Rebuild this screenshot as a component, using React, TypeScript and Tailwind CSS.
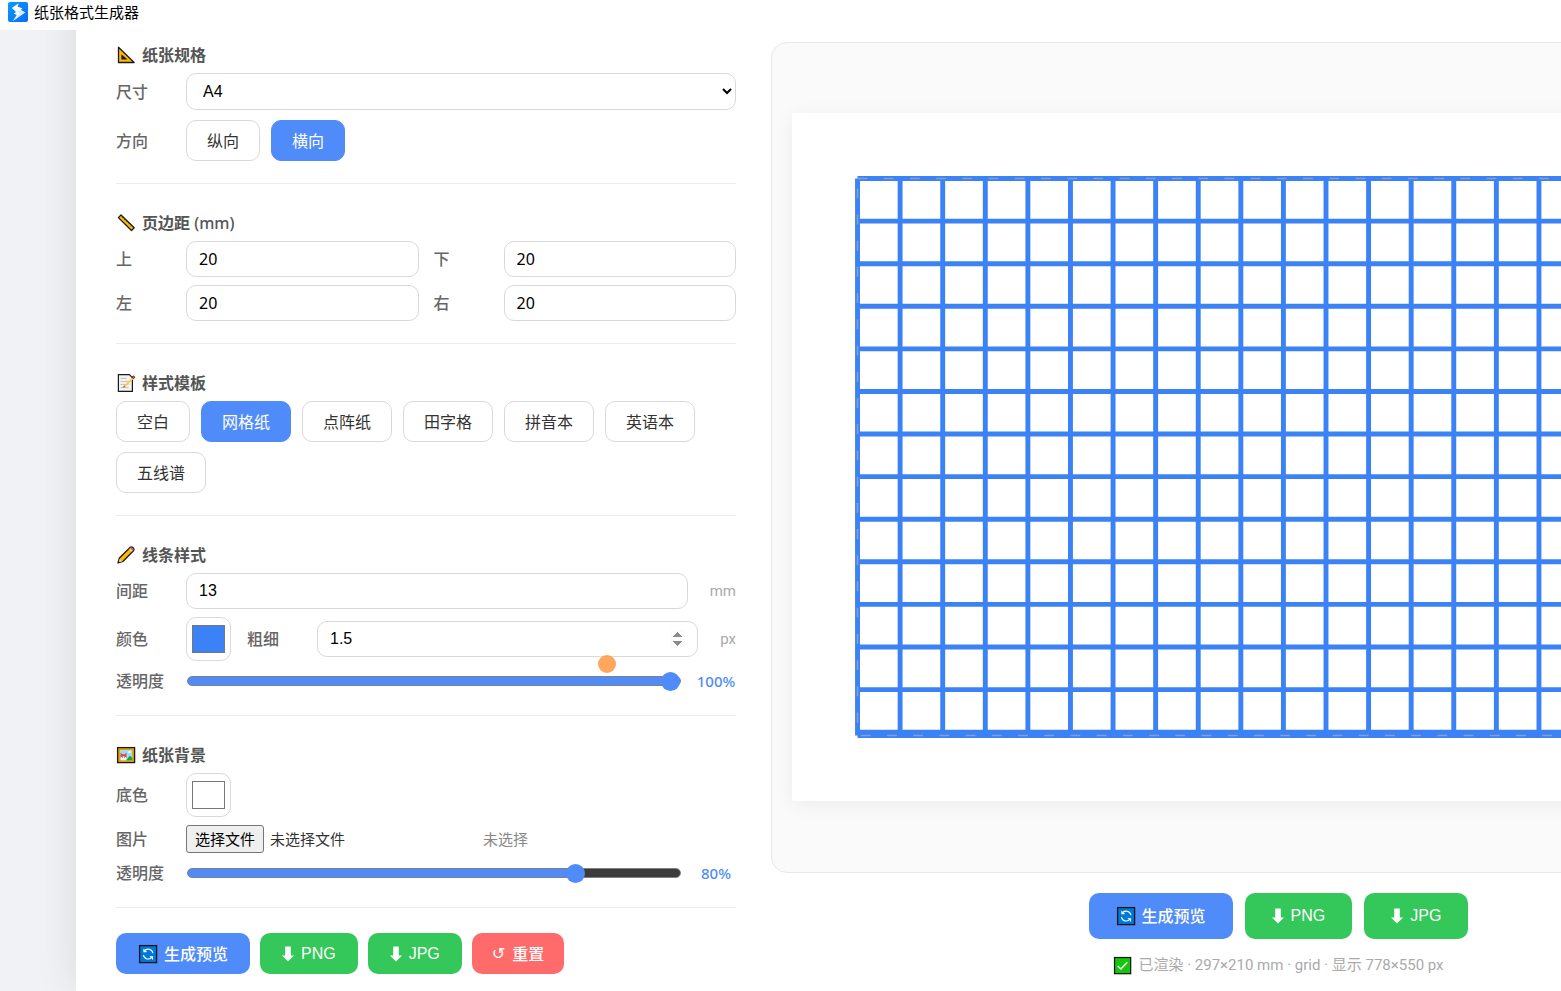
import { ReactNode, useState } from "react";

const PAPER = { width: 973, height: 688 };
const SIZE_MM = { width: 297, height: 210 };
const SCALE = PAPER.width / SIZE_MM.width;

const TEMPLATES = ["空白", "网格纸", "点阵纸", "田字格", "拼音本", "英语本", "五线谱"];

const fieldClass =
  "min-w-0 flex-1 rounded-[10px] border border-[#d9d9d9] bg-white px-3 text-base text-black outline-none";

/* ---------- icons ---------- */

function LogoIcon() {
  return (
    <svg viewBox="0 0 20 20" className="size-5" aria-hidden="true">
      <defs>
        <linearGradient id="logo-bg" x1="0" y1="0" x2="1" y2="1">
          <stop offset="0" stopColor="#0a9bff" />
          <stop offset="1" stopColor="#0a6cf5" />
        </linearGradient>
      </defs>
      <rect width="20" height="20" rx="2" fill="url(#logo-bg)" />
      <path d="M10.6 1.200 3.800 6l4.300 4-2.300 1.400 3 1.500-4 6.100 12.200-8.600-4.200-2.400 1.600-1.800-4.600-1.500z" fill="#fff" />
      <path d="m12.800 8 4.200 2.400-12.200 8.600 7.200-7.700-3.600-1.500z" fill="#d3ebff" />
    </svg>
  );
}

function SetSquareIcon() {
  return (
    <svg viewBox="0 0 20 20" className="size-5" aria-hidden="true">
      <path d="M2.5 2.2v15.3h15.6z" fill="#ffb900" stroke="#1a1a1a" strokeWidth="1.3" strokeLinejoin="round" />
      <path d="M5.4 9.2v5.4h6.2z" fill="#1a1a1a" />
    </svg>
  );
}

function RulerIcon() {
  return (
    <svg viewBox="0 0 20 20" className="size-5" aria-hidden="true">
      <path d="M2.4 4.6 5 2l13.2 12.8-2.7 2.7z" fill="#ffb900" stroke="#1a1a1a" strokeWidth="1.3" strokeLinejoin="round" />
      <path d="m6.900 3.900-1 1M9 6 8 7M11.200 8.100l-1 1M13.400 10.200l-1 1M15.500 12.300l-1 1" stroke="#1a1a1a" strokeWidth=".6" />
    </svg>
  );
}

function MemoIcon() {
  return (
    <svg viewBox="0 0 20 20" className="size-5" aria-hidden="true">
      <path d="M2.400 1.700h11l3 3v13.700h-14z" fill="#f2f2f2" stroke="#1a1a1a" strokeWidth="1.200" />
      <path d="M4.500 5.500h6M4.500 8.500h8M4.500 11.500h8M4.500 14.500h8" stroke="#c4c4c4" strokeWidth="1" />
      <path d="m6.800 15 1.300-2.400 9-8.900 1.400 1.400-9.200 8.700z" fill="#ffc83d" />
      <path d="m15.900 4.200 1.200-1.100c.6-.5 2.200 1 1.600 1.600l-1.200 1.100z" fill="#f03a4e" stroke="#1a1a1a" strokeWidth=".7" />
      <path d="m6.800 15 1.300-2.400 1.200 1.200z" fill="#8a6a38" />
    </svg>
  );
}

function PencilIcon() {
  return (
    <svg viewBox="0 0 20 20" className="size-5" aria-hidden="true">
      <path d="m2 18 1.400-5L14.300 2.200c1.500-1.300 4.800 1.700 3.400 3.300L6.900 16.500z" fill="#ffb900" stroke="#1a1a1a" strokeWidth="1.300" strokeLinejoin="round" />
      <path d="m14.200 3.300.6-.7c1.100-.8 3.200 1.100 2.500 2.500l-.6.700z" fill="#e8485b" />
      <path d="m13.200 4.200 1-.9 2.500 2.500-.9 1z" fill="#d0d0d0" />
      <path d="m2.700 17.300.9-3.400 2.500 2.300z" fill="#f5d7a5" />
      <path d="m2 18 .6-2 1.400 1.400z" fill="#1a1a1a" />
    </svg>
  );
}

function FrameIcon() {
  return (
    <svg viewBox="0 0 20 20" className="size-5" aria-hidden="true">
      <rect x="1.600" y="2.600" width="17" height="15" fill="#e6a100" stroke="#1a1a1a" strokeWidth="1.300" />
      <rect x="4" y="5" width="12.200" height="10.200" fill="#9bdcf8" />
      <circle cx="13.500" cy="7" r="1.200" fill="#fff" />
      <path d="m10.500 15.200 3.200-4.800 2.500 2.500v2.300z" fill="#16a34a" />
      <path d="m4.500 7.500 1.700 1.800h2.600l1.700-1.800v5h-6z" fill="#e8452e" />
      <path d="M5 15.200v-3l2.500-1 2.500 1v3z" fill="#f2f2f2" />
      <path d="M6.200 12.300h.6M8.300 12.300h.6" stroke="#1a1a1a" strokeWidth=".8" />
    </svg>
  );
}

function RefreshTileIcon() {
  return (
    <svg viewBox="0 0 20 20" className="size-5" fill="none" aria-hidden="true">
      <rect x="1.600" y="1.600" width="17" height="17" fill="#0078d7" stroke="#141414" strokeWidth="1.300" />
      <path d="M5.400 11.200a4.800 4.800 0 0 0 8.700 1.700M14.900 9.200a4.800 4.800 0 0 0-8.700-1.900" stroke="#fff" strokeWidth="1.100" />
      <path d="M5.900 4.900v2.700h2.700M14.500 15.500v-2.700h-2.700" stroke="#fff" strokeWidth="1.100" />
    </svg>
  );
}

function CheckTileIcon() {
  return (
    <svg viewBox="0 0 20 20" className="size-[19px]" fill="none" aria-hidden="true">
      <rect x="1.600" y="1.600" width="17" height="17" fill="#16c60c" stroke="#141414" strokeWidth="1.300" />
      <path d="m5 10.500 3.300 3.200L15 6.500" stroke="#fff" strokeWidth="1.500" />
    </svg>
  );
}

function DownIcon() {
  return (
    <svg viewBox="0 0 12 16" className="h-4 w-3" fill="currentColor" aria-hidden="true">
      <path d="M3.200 .5h5.600v9H12L6 15.500 0 9.500h3.200z" />
    </svg>
  );
}

/* ---------- building blocks ---------- */

interface SectionProps {
  icon: ReactNode;
  title: string;
  unit?: string;
  children: ReactNode;
}

function Section({ icon, title, unit, children }: SectionProps) {
  return (
    <section className="mb-[27px] border-b border-[#ececec] pb-[22px]">
      <h2 className="mb-1.5 flex h-6 items-center gap-1.5 text-base font-bold text-[#555]">
        {icon}
        <span>
          {title}
          {unit && <span className="font-medium"> ({unit})</span>}
        </span>
      </h2>
      {children}
    </section>
  );
}

function Label({ htmlFor, children }: { htmlFor?: string; children: ReactNode }) {
  const className = "w-[70px] shrink-0 text-base leading-6 font-medium text-[#666]";
  return htmlFor ? (
    <label htmlFor={htmlFor} className={className}>
      {children}
    </label>
  ) : (
    <span className={className}>{children}</span>
  );
}

interface ChoiceProps {
  active: boolean;
  onClick: () => void;
  children: ReactNode;
}

function Choice({ active, onClick, children }: ChoiceProps) {
  return (
    <button
      type="button"
      aria-pressed={active}
      onClick={onClick}
      className={
        active
          ? "h-[41px] rounded-[10px] border border-[#4f8cf9] bg-[#4f8cf9] px-5 text-base text-white"
          : "h-[41px] rounded-[10px] border border-[#d9d9d9] bg-white px-5 text-base text-[#333]"
      }
    >
      {children}
    </button>
  );
}

function MarginField({ id, label }: { id: string; label: string }) {
  return (
    <div className="flex items-center">
      <Label htmlFor={id}>{label}</Label>
      <input id={id} type="number" defaultValue={20} className={`${fieldClass} h-9`} />
    </div>
  );
}

function ColorField({ id, value }: { id: string; value: string }) {
  return (
    <input
      id={id}
      type="color"
      defaultValue={value}
      className="h-11 w-[45px] shrink-0 rounded-[10px] border border-[#d9d9d9] bg-white px-[5px] py-[7px] [&::-webkit-color-swatch]:rounded-none [&::-webkit-color-swatch]:border [&::-webkit-color-swatch]:border-[#777] [&::-webkit-color-swatch-wrapper]:p-0"
    />
  );
}

function OpacityField({ id, initial }: { id: string; initial: number }) {
  const [value, setValue] = useState(initial);
  return (
    <div className="flex h-6 items-center">
      <Label htmlFor={id}>透明度</Label>
      <input
        id={id}
        type="range"
        min={0}
        max={100}
        value={value}
        onChange={(e) => setValue(Number(e.target.value))}
        className="ml-px h-[10px] min-w-0 flex-1 appearance-none rounded-full border border-[#808080] [&::-webkit-slider-thumb]:size-[19px] [&::-webkit-slider-thumb]:appearance-none [&::-webkit-slider-thumb]:rounded-full [&::-webkit-slider-thumb]:bg-[#4f8cf9]"
        style={{ background: `linear-gradient(to right, #4f8cf9 ${value}%, #3b3b3b ${value}%)` }}
      />
      <output htmlFor={id} className="ml-[15px] w-10 text-center text-[15px] font-medium text-[#4f8cf9]">
        {value}%
      </output>
    </div>
  );
}

/* ---------- preview ---------- */

function GridPaper() {
  const margin = 20 * SCALE;
  const step = 13 * SCALE;
  const right = PAPER.width - margin;
  const bottom = PAPER.height - margin;

  const columns: number[] = [];
  for (let x = margin; x < right; x += step) columns.push(x);
  columns.push(right);

  const rows: number[] = [];
  for (let y = margin; y < bottom; y += step) rows.push(y);
  rows.push(bottom);

  return (
    <svg
      viewBox={`0 0 ${PAPER.width} ${PAPER.height}`}
      className="block w-full rounded-xs bg-white shadow-[0_4px_20px_rgba(0,0,0,0.06)]"
      role="img"
      aria-label="grid"
    >
      <g stroke="#3b82f6" strokeWidth={1.5 * SCALE}>
        {columns.map((x) => (
          <line key={x} x1={x} x2={x} y1={margin} y2={bottom} />
        ))}
        {rows.map((y) => (
          <line key={y} x1={margin} x2={right} y1={y} y2={y} />
        ))}
      </g>
      <rect
        x={margin}
        y={margin}
        width={right - margin}
        height={bottom - margin}
        fill="none"
        stroke="#b4b4b4"
        strokeOpacity="0.6"
        strokeWidth="1.600"
        strokeDasharray={`${3 * SCALE} ${5 * SCALE}`}
      />
    </svg>
  );
}

export default function App() {
  const [orientation, setOrientation] = useState("横向");
  const [template, setTemplate] = useState("网格纸");

  return (
    <div className="flex min-h-screen flex-col overflow-hidden bg-[#f0f2f6] font-['Noto_Sans','Noto_Sans_CJK_SC',sans-serif]">
      <header className="z-10 flex h-[30px] shrink-0 items-center gap-1.5 bg-white px-2 pb-1.5">
        <LogoIcon />
        <h1 className="text-[15px] leading-5 text-black">纸张格式生成器</h1>
      </header>

      <div className="flex flex-1 pl-[76px]">
        <main className="-mt-12 flex flex-1 gap-[35px] bg-white px-10 pt-[61px] shadow-[0_0_40px_rgba(0,0,0,0.1)]">
          <div className="w-[620px] shrink-0">
            <Section icon={<SetSquareIcon />} title="纸张规格">
              <div className="flex flex-col gap-2.5">
                <div className="flex items-center">
                  <Label htmlFor="size">尺寸</Label>
                  <select id="size" defaultValue="A4" className={`${fieldClass} h-[37px] pr-0.5 font-['Liberation_Sans',sans-serif]`}>
                    <option>A3</option>
                    <option>A4</option>
                    <option>A5</option>
                    <option>B5</option>
                  </select>
                </div>
                <div className="flex items-center">
                  <Label>方向</Label>
                  <div className="flex gap-[11px]">
                    {["纵向", "横向"].map((item) => (
                      <Choice key={item} active={item === orientation} onClick={() => setOrientation(item)}>
                        {item}
                      </Choice>
                    ))}
                  </div>
                </div>
              </div>
            </Section>

            <Section icon={<RulerIcon />} title="页边距" unit="mm">
              <div className="grid grid-cols-2 gap-x-[15px] gap-y-2">
                <MarginField id="margin-top" label="上" />
                <MarginField id="margin-bottom" label="下" />
                <MarginField id="margin-left" label="左" />
                <MarginField id="margin-right" label="右" />
              </div>
            </Section>

            <Section icon={<MemoIcon />} title="样式模板">
              <div className="flex flex-wrap gap-x-[11px] gap-y-2.5">
                {TEMPLATES.map((item) => (
                  <Choice key={item} active={item === template} onClick={() => setTemplate(item)}>
                    {item}
                  </Choice>
                ))}
              </div>
            </Section>

            <Section icon={<PencilIcon />} title="线条样式">
              <div className="flex flex-col gap-2">
                <div className="flex items-center">
                  <Label htmlFor="spacing">间距</Label>
                  <input
                    id="spacing"
                    type="number"
                    defaultValue={13}
                    className={`${fieldClass} h-9 font-['Liberation_Sans',sans-serif]`}
                  />
                  <span className="ml-[22px] font-['Roboto',sans-serif] text-[15px] text-[#aaa]">mm</span>
                </div>
                <div className="relative flex items-center">
                  <Label htmlFor="line-color">颜色</Label>
                  <ColorField id="line-color" value="#3b82f6" />
                  <span className="w-4" />
                  <Label htmlFor="line-width">粗细</Label>
                  <input
                    id="line-width"
                    type="number"
                    step={0.5}
                    defaultValue={1.5}
                    className={`${fieldClass} h-9 font-['Liberation_Sans',sans-serif] [&::-webkit-inner-spin-button]:opacity-100`}
                  />
                  <span className="ml-[22px] font-['Roboto',sans-serif] text-[15px] text-[#aaa]">px</span>
                  {/* pointer highlight */}
                  <span className="absolute right-[120px] -bottom-3 size-[18px] rounded-full bg-[#ff983f]/85" />
                </div>
                <OpacityField id="line-opacity" initial={100} />
              </div>
            </Section>

            <Section icon={<FrameIcon />} title="纸张背景">
              <div className="flex flex-col gap-2">
                <div className="flex items-center">
                  <Label htmlFor="paper-color">底色</Label>
                  <ColorField id="paper-color" value="#ffffff" />
                </div>
                <div className="flex items-center text-[15px]">
                  <Label htmlFor="paper-image">图片</Label>
                  <div className="flex w-[297px] items-center gap-1.5 text-[#333]">
                    <input id="paper-image" type="file" accept="image/*" className="sr-only" />
                    <label
                      htmlFor="paper-image"
                      className="flex h-7 items-center rounded-[3px] border border-[#767676] bg-[#efefef] px-2 text-black"
                    >
                      选择文件
                    </label>
                    <span>未选择文件</span>
                  </div>
                  <span className="text-[#888]">未选择</span>
                </div>
                <OpacityField id="paper-opacity" initial={80} />
              </div>
            </Section>

            <div className="-mt-0.5 flex gap-2.5 text-base text-white">
              <button type="button" className="flex h-[41px] items-center gap-1.5 rounded-[10px] bg-[#4f8cf9] px-[22px] font-medium">
                <RefreshTileIcon />
                生成预览
              </button>
              <button type="button" className="flex h-[41px] items-center gap-[7px] rounded-[10px] bg-[#34c759] px-[22px] font-['Liberation_Sans',sans-serif]">
                <DownIcon />
                PNG
              </button>
              <button type="button" className="flex h-[41px] items-center gap-[7px] rounded-[10px] bg-[#34c759] px-[22px] font-['Liberation_Sans',sans-serif]">
                <DownIcon />
                JPG
              </button>
              <button type="button" className="flex h-[41px] items-center gap-[7px] rounded-[10px] bg-[#ff6b6b] px-5 font-medium">
                <span className="font-['DejaVu_Sans',sans-serif]">↺</span>
                重置
              </button>
            </div>
          </div>

          <div className="-mt-px flex min-w-[1015px] flex-1 flex-col items-center">
            <div className="w-full rounded-2xl border border-[#e8e8e8] bg-[#fafafa] px-5 pt-[70px] pb-[71px]">
              <GridPaper />
            </div>
            <div className="mt-5 flex gap-3 text-base text-white">
              <button type="button" className="flex h-[46px] items-center gap-1.5 rounded-[10px] bg-[#4f8cf9] px-[27px] font-medium">
                <RefreshTileIcon />
                生成预览
              </button>
              <button type="button" className="flex h-[46px] items-center gap-[7px] rounded-[10px] bg-[#34c759] px-[27px] font-['Liberation_Sans',sans-serif]">
                <DownIcon />
                PNG
              </button>
              <button type="button" className="flex h-[46px] items-center gap-[7px] rounded-[10px] bg-[#34c759] px-[27px] font-['Liberation_Sans',sans-serif]">
                <DownIcon />
                JPG
              </button>
            </div>
            <p className="mt-3.5 flex h-6 items-center gap-1.5 font-['Roboto','Noto_Sans_CJK_SC',sans-serif] text-[15px] text-[#aaa]">
              <CheckTileIcon />
              已渲染 · 297×210 mm · grid · 显示 778×550 px
            </p>
          </div>
        </main>
      </div>
    </div>
  );
}
